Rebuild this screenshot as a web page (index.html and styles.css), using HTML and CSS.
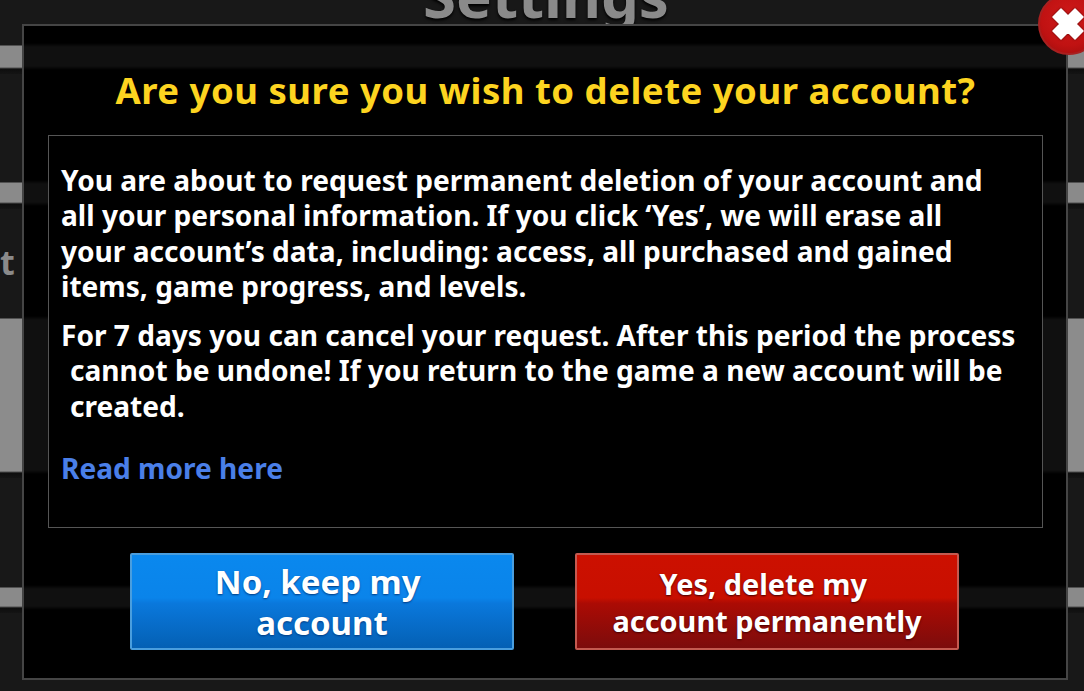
FILE: index.html
```html
<!DOCTYPE html>
<html>

<head>
    <title>Settings</title>
    <meta http-equiv="Content-Type" content="text/html; charset=UTF-8">
    <link rel="stylesheet" href="styles.css">
</head>

<body>
    <div class='screen'>
        <h1 class='screen-title'>Settings</h1>
        <span class='screen-letter'>t</span>
        <div class='dialog'>
            <h2 class='dialog-title'>Are you sure you wish to delete your account?</h2>
            <div class='message'>
                <p>You are about to request permanent deletion of your account and<br>
                    all your personal information. If you click ‘Yes’, we will erase all<br>
                    your account’s data, including: access, all purchased and gained<br>
                    items, game progress, and levels.</p>
                <p class='hanging'>For 7 days you can cancel your request. After this period the process<br>
                    cannot be undone! If you return to the game a new account will be<br>
                    created.</p>
                <a class='more' href='#'>Read more here</a>
            </div>
            <div class='actions'>
                <button class='btn btn-blue'>No, keep my&nbsp;<br>account</button>
                <button class='btn btn-red'>Yes, delete my&nbsp;<br>account permanently</button>
            </div>
        </div>
        <div class='close'>
            <svg viewBox="0 0 40 40" width="40" height="40">
                <path d="M5 13 L13 5 L20 12 L27 5 L35 13 L28 20 L35 27 L27 35 L20 28 L13 35 L5 27 L12 20 Z" fill="#fff" stroke="#fff" stroke-width="1.5" stroke-linejoin="round" />
            </svg>
        </div>
    </div>
</body>

</html>
```

FILE: styles.css
```css
html,
body
{
    margin: 0;
    width: 100%;
    height: 100%;
    overflow: hidden;
    background-color: #161616;
    font-family: "Noto Sans", "Open Sans", sans-serif;
}

.screen
{
    position: relative;
    box-sizing: border-box;
    width: 1084px;
    height: 691px;
    overflow: hidden;
    padding: 24px 16px 11px 22px;
    background-color: #181818;
    background-image:
        linear-gradient(to bottom,
            transparent 45px, #8a8a8a 46px, #8a8a8a 67px, #0e0e0e 69px, #141414 74px, transparent 74px,
            transparent 182px, #8a8a8a 183px, #8a8a8a 202px, #0e0e0e 204px, #141414 209px, transparent 209px,
            transparent 318px, #8c8c8c 319px, #8c8c8c 471px, #0e0e0e 473px, #141414 478px, transparent 478px,
            transparent 587px, #8a8a8a 588px, #8a8a8a 606px, #0e0e0e 608px, #141414 613px, transparent 613px);
}

.screen-title
{
    position: absolute;
    top: -40px;
    left: 0;
    width: 1092px;
    margin: 0;
    text-align: center;
    font-size: 60px;
    line-height: 70px;
    font-weight: 700;
    color: #8a8a8a;
    text-shadow: 0 2px 3px #000;
}

.screen-letter
{
    position: absolute;
    top: 240px;
    left: 0;
    font-size: 34px;
    line-height: 44px;
    font-weight: 700;
    color: #8a8a8a;
}

.dialog
{
    position: relative;
    box-sizing: border-box;
    height: 100%;
    padding: 0 23px 0 24px;
    border: 2px solid #454545;
    background-color: #000;
    background-image:
        linear-gradient(to bottom,
            transparent 17px, #101010 21px, #101010 40px, transparent 44px,
            transparent 154px, #101010 158px, #101010 176px, transparent 180px,
            transparent 290px, #101010 294px, #101010 444px, transparent 448px,
            transparent 559px, #101010 563px, #101010 580px, transparent 584px);
}

.dialog-title
{
    margin: 0;
    height: 109px;
    box-sizing: border-box;
    padding-top: 41px;
    text-align: center;
    white-space: nowrap;
    font-size: 36.5px;
    line-height: 46px;
    letter-spacing: .5px;
    font-weight: 700;
    color: #fdd420;
}

.message
{
    box-sizing: border-box;
    height: 393px;
    padding: 26.5px 12px 0 12px;
    border: 1px solid #555;
    background-color: #000;
    color: #fff;
    white-space: nowrap;
    font-size: 28.1px;
    line-height: 35.5px;
    font-weight: 700;
}

.message p
{
    margin: 0 0 13px 0;
}

.message .hanging
{
    padding-left: 9px;
    text-indent: -9px;
}

.more
{
    display: block;
    margin-top: 27px;
    color: #4a7fe8;
    text-decoration: none;
}

.actions
{
    display: flex;
    justify-content: center;
    gap: 61px;
    margin-top: 25px;
    padding-right: 2px;
}

.btn
{
    box-sizing: border-box;
    width: 384px;
    height: 97px;
    padding: 0;
    border-radius: 2px;
    color: #fff;
    font-family: inherit;
    font-weight: 700;
}

.btn-blue
{
    border: 2px solid #4a9ede;
    font-size: 33px;
    line-height: 41px;
    text-shadow: 0 1px 2px #003a80;
    background: linear-gradient(to bottom, #0a88ee 0%, #0a84ea 46%, #0a78dc 52%, #0460b4 100%);
}

.btn-red
{
    border: 2px solid #c45a50;
    font-size: 28.9px;
    line-height: 37px;
    text-shadow: 0 1px 2px #400;
    background: linear-gradient(to bottom, #cc1000 0%, #c80f00 46%, #ab0b04 52%, #7c0c0c 100%);
}

.close
{
    position: absolute;
    top: -7px;
    right: -16px;
    display: flex;
    align-items: center;
    justify-content: center;
    box-sizing: border-box;
    width: 62px;
    height: 62px;
    padding-right: 3px;
    border-radius: 50%;
    background: radial-gradient(circle at 50% 40%, #d01a1a 0%, #c01212 60%, #9a0c0c 100%);
    border: 2px solid #a82020;
}

.close svg
{
    filter: drop-shadow(0 0 1px #5a0808);
}
```
